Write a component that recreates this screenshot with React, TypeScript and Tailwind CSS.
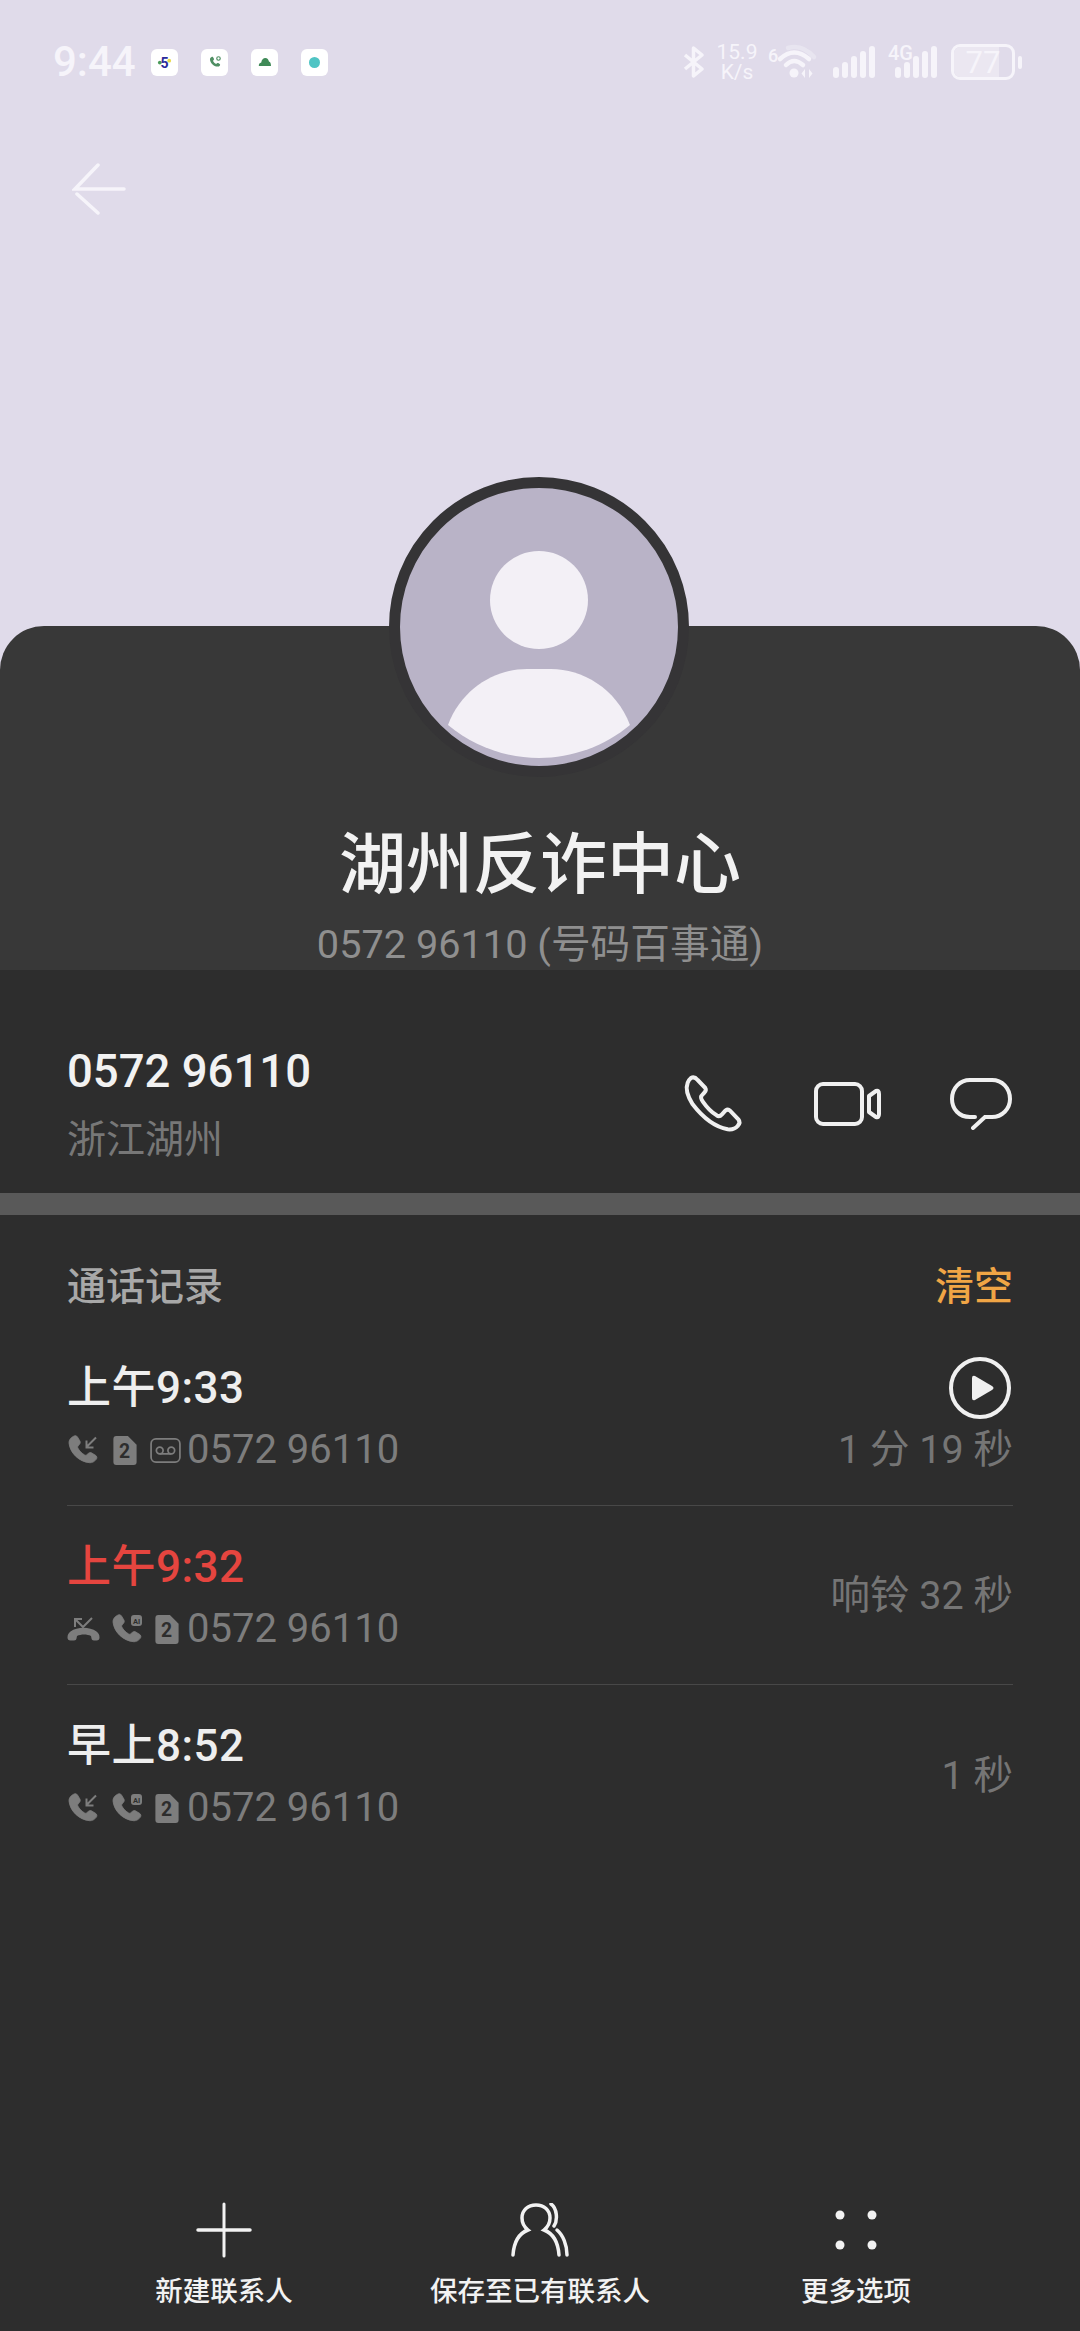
import type { ReactNode } from "react";

const handset =
  "M6.2 3.4c.9-.7 1.900-.5 2.500.4l1.500 2.500c.4.7.3 1.400-.2 2l-1 1.200c-.3.4-.3.8-.1 1.200 1 1.800 2.500 3.300 4.300 4.400.4.200.8.200 1.200-.1l1.200-1c.6-.5 1.300-.6 2-.2l2.400 1.500c.9.600 1.100 1.600.4 2.500-1 1.300-2.400 2.200-4 2.100C9.600 19.500 3.800 13.400 3.400 7.500c-.1-1.600.9-3.100 2.800-4.100z";

function MiniCall({ children, className }: { children?: ReactNode; className?: string }) {
  return (
    <svg viewBox="0 0 29 28" className={`h-[28px] w-[29px] shrink-0 overflow-visible fill-[#7d7d7d] ${className ?? ""}`}>
      <g transform="scale(1.6) translate(-3.400 -3.200)">
        <path d={handset} stroke="#7d7d7d" strokeWidth="0.5" />
      </g>
      {children}
    </svg>
  );
}

function IncomingCall() {
  return (
    <MiniCall className="mr-[2px] ml-[2px]">
      <path d="M27 1.500 L17.500 11 M17.500 4.500 V11.500 H24.500" className="fill-none stroke-[#7d7d7d]" strokeWidth="2" />
    </MiniCall>
  );
}

function AiCall() {
  return (
    <MiniCall>
      <rect x="18" y="0" width="11" height="11" rx="3" className="fill-[#7d7d7d]" />
      <text x="23.500" y="8.500" textAnchor="middle" fontSize="7.500" fontWeight="700" fontFamily="Roboto" className="fill-[#2d2d2d]">
        AI
      </text>
    </MiniCall>
  );
}

function MissedCall() {
  return (
    <svg viewBox="0 0 33 24" className="h-[24px] w-[33px] shrink-0 fill-[#7d7d7d]">
      <path d="M.5 20.500c0-3 1-4.500 3-6 7-5 19-5 26 0 2 1.500 3 3 3 6 0 2-1 3-3 3H27c-1.500 0-2.300-.8-2.500-2l-.5-2.500c-4-2-10-2-14 0l-.5 2.500c-.2 1.200-1 2-2.500 2H3.500c-2 0-3-1-3-3z" />
      <path d="M8 10V2H15M8 2L16 10L25 1" className="fill-none stroke-[#7d7d7d]" strokeWidth="2" />
    </svg>
  );
}

function SimTwo() {
  return (
    <svg viewBox="0 0 24 30" className="h-[29px] w-[24px] shrink-0">
      <path d="M3 0h12l9 9v18a3 3 0 0 1-3 3H3a3 3 0 0 1-3-3V3a3 3 0 0 1 3-3z" className="fill-[#7d7d7d]" />
      <text x="11.500" y="23" textAnchor="middle" fontSize="20" fontWeight="700" fontFamily="Roboto" className="fill-[#2d2d2d]">
        2
      </text>
    </svg>
  );
}

function Voicemail() {
  return (
    <svg viewBox="0 0 32 26" className="h-[25px] w-[31px] shrink-0 fill-none stroke-[#7d7d7d]" strokeWidth="1.800">
      <rect x="1" y="1" width="30" height="24" rx="5" />
      <circle cx="10" cy="13" r="3.500" />
      <circle cx="22" cy="13" r="3.500" />
      <path d="M10 16.500h12" />
    </svg>
  );
}

function CallRow({
  time,
  missed,
  icons,
  right,
  duration
}: {
  time: string;
  missed?: boolean;
  icons: ReactNode;
  right?: ReactNode;
  duration: string;
}) {
  return (
    <div className="flex h-[179px] justify-between border-b border-[#484848] last:border-0">
      <div className="flex flex-col pt-[30px]">
        <p className={missed ? "text-[44px] leading-[62px] font-medium tracking-[0.5px] text-[#e5453f]" : "text-[44px] leading-[62px] font-medium tracking-[0.5px] text-[#eeeeee]"}>
          {time}
        </p>
        <div className="mt-[1px] flex h-[60px] items-center">
          <div className="flex w-[120px] shrink-0 items-center gap-[13px]">{icons}</div>
          <span className="text-[40px] text-[#7d7d7d]">0572 96110</span>
        </div>
      </div>
      <div className="flex flex-col items-end justify-center pt-[2px]">
        {right}
        <span className="text-[39.5px] leading-[54px] text-[#757575]">{duration}</span>
      </div>
    </div>
  );
}

function NavItem({ icon, label }: { icon: ReactNode; label: string }) {
  return (
    <div className="flex w-[300px] flex-col items-center">
      <div className="flex h-[56px] items-center justify-center">{icon}</div>
      <span className="mt-[14px] text-[27.5px] leading-[40px] font-medium text-[#f2f2f2]">{label}</span>
    </div>
  );
}

function Signal({ className }: { className?: string }) {
  return (
    <svg viewBox="0 0 42 32" className={className}>
      <g className="fill-[#f6f4fa]">
        <rect x="0" y="21" width="6" height="11" rx="3" />
        <rect x="9" y="16" width="6" height="16" rx="3" />
        <rect x="18" y="10" width="6" height="22" rx="3" />
        <rect x="27" y="5" width="6" height="27" rx="3" />
        <rect x="36" y="0" width="6" height="32" rx="3" />
      </g>
    </svg>
  );
}

export default function App() {
  return (
    <div className="flex h-[2331px] w-[1080px] flex-col overflow-hidden bg-[#e0dbea] font-['Roboto','Noto_Sans_CJK_SC',sans-serif]">
      <div className="h-[626px] shrink-0 pt-[40px]">
        <div className="flex h-[44px] items-center justify-between pr-[58px] pl-[53px] text-[#f6f4fa]">
          <div className="flex items-center">
            <span className="w-[98px] text-[42px] leading-none font-medium">9:44</span>
            <div className="flex gap-[23px]">
              <span className="grid h-[27px] w-[27px] place-items-center rounded-[6px] bg-white">
                <svg viewBox="0 0 16 16" className="h-[15px] w-[15px]">
                  <circle cx="3" cy="8" r="2" fill="#4a9a58" />
                  <circle cx="13" cy="6" r="2" fill="#e8d94a" />
                  <text x="8" y="14" textAnchor="middle" fontSize="15" fontWeight="700" fontFamily="Roboto" fill="#2b2b9a">
                    5
                  </text>
                </svg>
              </span>
              <span className="grid h-[27px] w-[27px] place-items-center rounded-[6px] bg-white">
                <svg viewBox="0 0 24 24" className="h-[14px] w-[14px] fill-[#4f8f63]">
                  <path d={handset} />
                  <circle cx="18" cy="6" r="3" fill="none" stroke="#4f8f63" strokeWidth="2" />
                </svg>
              </span>
              <span className="grid h-[27px] w-[27px] place-items-center rounded-[6px] bg-white">
                <svg viewBox="0 0 16 12" className="h-[10px] w-[13px] fill-[#3f8a57]">
                  <path d="M1 11c0-3 1-4 3-4.500C4.500 3 6.500 1 9 1s4 2 4.500 4.500c1.500.5 2.500 2 2.500 5.500z" />
                </svg>
              </span>
              <span className="grid h-[27px] w-[27px] place-items-center rounded-[6px] bg-white">
                <span className="h-[11px] w-[11px] rounded-full bg-[#4fc4c4]" />
              </span>
            </div>
          </div>
          <div className="flex items-center">
            <svg viewBox="0 0 21 32" className="h-[32px] w-[21px] fill-none stroke-[#f6f4fa]" strokeWidth="3.500">
              <path d="M2 9 L19 23 L10.500 30 V2 L19 9 L2 23" strokeLinejoin="round" />
            </svg>
            <div className="ml-[10px] flex w-[46px] flex-col items-center text-[21px] leading-[20px]">
              <span>15.9</span>
              <span>K/s</span>
            </div>
            <div className="ml-[8px] flex h-[32px] w-[47px] items-start">
              <span className="text-[18px] leading-[20px] font-medium">6</span>
              <svg viewBox="0 0 38 32" className="h-[32px] w-[38px] overflow-visible fill-none stroke-[#f6f4fa]" strokeWidth="4.500" strokeLinecap="round">
                <path d="M10 2 Q24 -2 36 11" strokeOpacity="0.4" />
                <path d="M2 13 Q16 0 31 13" />
                <path d="M8 19 Q16 11 25 19" />
                <circle cx="16" cy="27" r="4.500" fill="#f6f4fa" stroke="none" />
                <path d="M27 23 l-3.500 4.500 l3.500 4.500 z M31 23 l3.500 4.500 l-3.500 4.500 z" fill="#f6f4fa" stroke="none" />
              </svg>
            </div>
            <Signal className="ml-[18px] h-[32px] w-[42px]" />
            <div className="relative ml-[13px] h-[32px] w-[49px]">
              <span className="absolute top-[-3px] left-0 text-[20px] leading-[20px] font-medium">4G</span>
              <Signal className="absolute top-0 left-[7px] h-[32px] w-[42px]" />
            </div>
            <div className="relative ml-[14px] grid h-[36px] w-[64px] place-items-center rounded-[9px] border-[3px] border-[#f6f4fa] text-[31px] leading-none">
              <span className="absolute inset-y-0 left-0 w-[77%] rounded-l-[6px] bg-[#ebe7f1]" />
              <span className="relative">77</span>
            </div>
            <span className="ml-[3px] h-[13px] w-[4px] rounded-full bg-[#f6f4fa]" />
          </div>
        </div>
        <div className="mt-[79px] pl-[72px]">
          <svg viewBox="0 0 54 52" className="h-[52px] w-[54px] fill-none stroke-[#f6f4fa]" strokeWidth="3.500" strokeLinecap="round">
            <path d="M26 2 L3 26 H52" />
            <path d="M5 31 L26 50" />
          </svg>
        </div>
      </div>

      <div className="relative h-[344px] shrink-0 rounded-t-[44px] bg-[#383838] text-center">
        <div className="absolute top-[-149px] left-[389px] h-[300px] w-[300px] rounded-full border-[11px] border-[#353436] bg-[#b9b3c7]">
          <svg viewBox="0 0 278 278" className="h-[278px] w-[278px]">
            <circle cx="139" cy="112" r="49" fill="#f3f0f6" />
            <path d="M48 237 C62 200 96 181 127 181 H151 C182 181 216 200 230 237 C205 258 172 270 139 270 C106 270 73 258 48 237 Z" fill="#f3f0f6" />
          </svg>
        </div>
        <h1 className="pt-[199px] text-[67px] leading-[80px] font-medium text-[#f2f2f2]">湖州反诈中心</h1>
        <p className="mt-[15px] text-[39.7px] leading-[50px] text-[#8f8f8f]">0572 96110 (号码百事通)</p>
      </div>

      <div className="flex flex-1 flex-col bg-[#2d2d2d]">
        <div className="flex h-[223px] items-center justify-between pr-[68px] pl-[67px]">
          <div className="flex flex-col pt-[46px]">
            <span className="text-[45.5px] leading-[60px] font-medium text-[#f2f2f2]">0572 96110</span>
            <span className="mt-[11px] text-[39px] leading-[54px] text-[#777777]">浙江湖州</span>
          </div>
          <div className="flex items-center pt-[44px]">
            <svg viewBox="0 0 165 165" className="h-[55px] w-[55px] overflow-visible fill-none stroke-[#f0f0f0]" strokeWidth="12" strokeLinejoin="round">
              <path d="M15 6 Q25 0 35 12 L58 36 Q62 42 55 50 L46 60 Q43 66 50 76 Q70 105 92 118 Q100 124 108 115 L118 104 Q126 98 132 104 L157 130 Q165 140 155 150 Q145 162 125 160 Q70 150 20 85 Q-5 45 5 20 Q8 12 15 6 Z" />
            </svg>
            <svg viewBox="0 0 67 44" className="ml-[73px] h-[44px] w-[67px] fill-none stroke-[#f0f0f0]" strokeWidth="4" strokeLinejoin="round">
              <rect x="2" y="2" width="46" height="40" rx="7" />
              <path d="M55 14 L62 9 Q65 8 65 12 V32 Q65 36 62 35 L55 30 Z" />
            </svg>
            <svg viewBox="0 0 62 52" className="ml-[69px] h-[52px] w-[62px] fill-none stroke-[#f0f0f0]" strokeWidth="4" strokeLinecap="round">
              <path d="M25 39 H20 C9 39 2 31 2 21 C2 10 10 2 20 2 H42 C52 2 60 10 60 21 C60 31 52 39 42 39 H35 L23 50" />
            </svg>
          </div>
        </div>

        <div className="h-[22px] bg-[#595959]" />

        <div className="flex h-[112px] items-end justify-between px-[67px] pb-[13px] text-[39px] leading-[54px]">
          <span className="font-medium text-[#a8a8a8]">通话记录</span>
          <span className="font-medium text-[#f0a545]">清空</span>
        </div>

        <div className="px-[67px]">
          <CallRow
            time="上午9:33"
            icons={
              <>
                <IncomingCall />
                <SimTwo />
                <Voicemail />
              </>
            }
            right={
              <svg viewBox="0 0 62 62" className="mr-[2px] mb-[4px] h-[62px] w-[62px]">
                <circle cx="31" cy="31" r="29" fill="none" stroke="#f0f0f0" strokeWidth="4" />
                <path d="M23 21 Q23 18 26 19 L43 29 Q46 31 43 33 L26 43 Q23 44 23 41 Z" fill="#f0f0f0" />
              </svg>
            }
            duration="1 分 19 秒"
          />
          <CallRow
            time="上午9:32"
            missed
            icons={
              <>
                <MissedCall />
                <AiCall />
                <SimTwo />
              </>
            }
            duration="响铃 32 秒"
          />
          <CallRow
            time="早上8:52"
            icons={
              <>
                <IncomingCall />
                <AiCall />
                <SimTwo />
              </>
            }
            duration="1 秒"
          />
        </div>

        <div className="mt-auto flex justify-between px-[74px] pb-[19px]">
          <NavItem
            label="新建联系人"
            icon={
              <svg viewBox="0 0 56 56" className="h-[56px] w-[56px] fill-none stroke-[#f2f2f2]" strokeLinecap="round">
                <path d="M28 2 V54" strokeWidth="3" />
                <path d="M2 28 H54" strokeWidth="3.500" />
              </svg>
            }
          />
          <NavItem
            label="保存至已有联系人"
            icon={
              <svg viewBox="0 0 58 54" className="h-[54px] w-[58px] fill-none stroke-[#f2f2f2]" strokeWidth="3.500" strokeLinecap="round">
                <path d="M2 52 C3 38 9 30 17 27 C12 23 11 18 11 15 C11 7 17 2 25 2 C33 2 39 7 39 15 C39 18 38 23 33 27 C41 30 47 38 48 52" />
                <path d="M40 1 C46 5 47 17 43 23" />
                <path d="M46 27 C52 32 56 42 56 52" />
              </svg>
            }
          />
          <NavItem
            label="更多选项"
            icon={
              <svg viewBox="0 0 42 40" className="h-[40px] w-[42px] fill-[#f2f2f2]">
                <circle cx="5" cy="5" r="4.500" />
                <circle cx="37" cy="5" r="4.500" />
                <circle cx="5" cy="35" r="4.500" />
                <circle cx="37" cy="35" r="4.500" />
              </svg>
            }
          />
        </div>
      </div>
    </div>
  );
}
